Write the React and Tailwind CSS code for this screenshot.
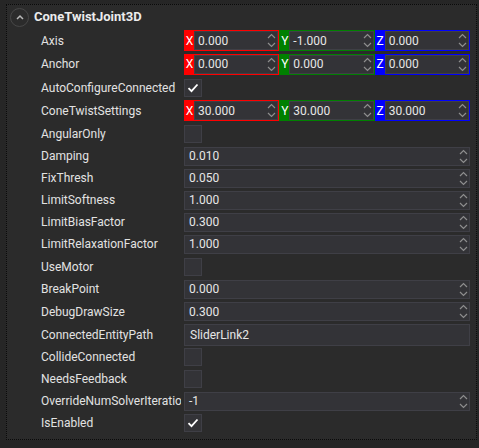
const FONT = { fontFamily: "Roboto, 'Noto Sans', 'Liberation Sans', sans-serif" };

// ── Icons ─────────────────────────────────────────────────────────────────────
const Spinner = () => (
  <svg width="9" height="15" viewBox="0 0 9 15" fill="none" stroke="#8e8e8e" strokeWidth="1.2">
    <path d="M1 5 L4.5 1.5 L8 5" />
    <path d="M1 10 L4.5 13.5 L8 10" />
  </svg>
);

const Check = () => (
  <svg width="12" height="10" viewBox="0 0 12 10" fill="none" stroke="#ffffff" strokeWidth="1.8">
    <path d="M1.5 5.2 L4.5 8.2 L10.5 1.5" />
  </svg>
);

const ChevronUp = () => (
  <svg width="8" height="6" viewBox="0 0 8 6" fill="none" stroke="#b8b8b8" strokeWidth="1.5">
    <path d="M1 5 L4 2 L7 5" />
  </svg>
);

// ── Value editors ─────────────────────────────────────────────────────────────
function Vec({ values }) {
  const parts = [
    { axis: "X", bg: "bg-[#ff0000]", border: "border-[#ff0000]" },
    { axis: "Y", bg: "bg-[#008000]", border: "border-[#008000]" },
    { axis: "Z", bg: "bg-[#0000ff]", border: "border-[#0000ff]" },
  ];
  return (
    <div className="flex h-[21px] w-full">
      {parts.map((p, i) => (
        <div key={p.axis} className={`flex flex-1 border ${p.border}`}>
          <span className={`w-[9px] flex items-center justify-center text-[12px] text-white ${p.bg}`}>
            {p.axis}
          </span>
          <div className="flex-1 flex items-center justify-between border border-[#3f3f46] bg-[#333337] pl-[3px] pr-[1px]">
            <span className="text-[12px] text-[#e6e6e6]">{values[i]}</span>
            <Spinner />
          </div>
        </div>
      ))}
    </div>
  );
}

function Num({ value }) {
  return (
    <div className="flex h-[19px] w-full items-center justify-between border border-[#3f3f46] bg-[#333337] pl-[4px] pr-[1px]">
      <span className="text-[12px] text-[#e6e6e6]">{value}</span>
      <Spinner />
    </div>
  );
}

function Text({ value }) {
  return (
    <div className="flex h-[22px] w-full items-center border border-[#3f3f46] bg-[#333337] pl-[5px]">
      <span className="text-[12px] text-[#e6e6e6]">{value}</span>
    </div>
  );
}

function Box({ checked }) {
  return (
    <div className="flex h-[18px] w-[18px] items-center justify-center border border-[#3f3f46] bg-[#333337]">
      {checked && <Check />}
    </div>
  );
}

// ── Row ───────────────────────────────────────────────────────────────────────
function Row({ label, h, children }) {
  return (
    <div className="flex items-center" style={{ height: h }}>
      <div className="w-[174px] shrink-0 overflow-hidden whitespace-nowrap pl-[34px] text-[12px] text-[#e2e2e2]">
        {label}
      </div>
      <div className="ml-[3px] w-[286px] shrink-0 flex items-center">{children}</div>
    </div>
  );
}

const rows = [
  ["Axis", 23, <Vec values={["0.000", "-1.000", "0.000"]} />],
  ["Anchor", 24, <Vec values={["0.000", "0.000", "0.000"]} />],
  ["AutoConfigureConnected", 23, <Box checked />],
  ["ConeTwistSettings", 23, <Vec values={["30.000", "30.000", "30.000"]} />],
  ["AngularOnly", 23, <Box />],
  ["Damping", 22, <Num value="0.010" />],
  ["FixThresh", 22, <Num value="0.050" />],
  ["LimitSoftness", 22, <Num value="1.000" />],
  ["LimitBiasFactor", 22, <Num value="0.300" />],
  ["LimitRelaxationFactor", 22, <Num value="1.000" />],
  ["UseMotor", 23, <Box />],
  ["BreakPoint", 22, <Num value="0.000" />],
  ["DebugDrawSize", 23, <Num value="0.300" />],
  ["ConnectedEntityPath", 23, <Text value="SliderLink2" />],
  ["CollideConnected", 22, <Box />],
  ["NeedsFeedback", 22, <Box />],
  ["OverrideNumSolverIterations", 22, <Num value="-1" />],
  ["IsEnabled", 22, <Box checked />],
];

export default function App() {
  return (
    <div className="w-[479px] h-[448px] bg-[#262626] overflow-hidden" style={FONT}>
      <div className="ml-[6px] mt-[4px] w-[471px] h-[436px] bg-[#2b2b2b] border border-dotted border-[#0a0a0a]">
        {/* header */}
        <div className="flex h-[24px] items-center gap-[5px] pl-[3px]">
          <div className="flex h-[19px] w-[19px] items-center justify-center rounded-full border border-[#474747]">
            <ChevronUp />
          </div>
          <span className="text-[13px] font-bold text-[#ececec]">ConeTwistJoint3D</span>
        </div>
        {rows.map(([label, h, editor]) => (
          <Row key={label} label={label} h={h}>
            {editor}
          </Row>
        ))}
      </div>
    </div>
  );
}
